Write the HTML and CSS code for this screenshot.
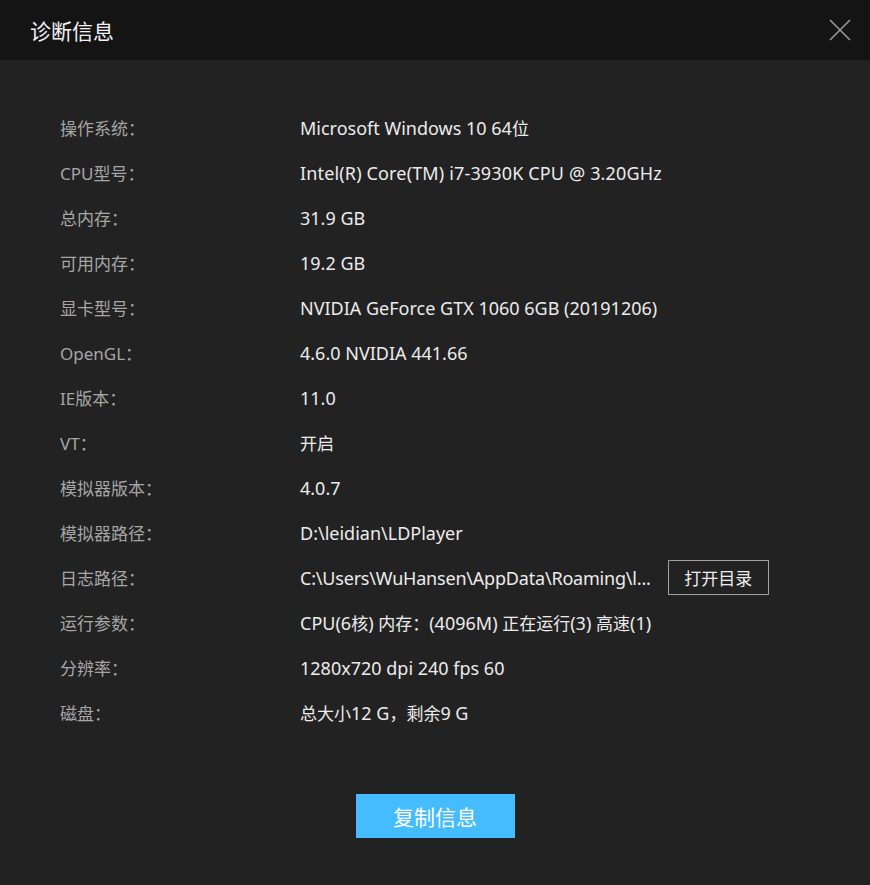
FILE: index.html
```html
<!DOCTYPE html>
<html lang="zh">
<head>
<meta charset="utf-8">
<link rel="stylesheet" href="styles.css">
</head>
<body>
<div class="dialog">
  <div class="header">
    <div class="title">诊断信息</div>
    <svg class="close" width="24" height="24" viewBox="0 0 24 24"><path d="M2 2 L22 22 M22 2 L2 22" stroke="#9a9a9a" stroke-width="1.6" fill="none"/></svg>
  </div>
  <div class="body">
    <div class="row"><div class="label">操作系统：</div><div class="value">Microsoft Windows 10 64<span class="cjk">位</span></div></div>
    <div class="row"><div class="label">CPU型号：</div><div class="value wide">Intel(R) Core(TM) i7-3930K CPU @ 3.20GHz</div></div>
    <div class="row"><div class="label">总内存：</div><div class="value">31.9 GB</div></div>
    <div class="row"><div class="label">可用内存：</div><div class="value">19.2 GB</div></div>
    <div class="row"><div class="label">显卡型号：</div><div class="value">NVIDIA GeForce GTX 1060 6GB (20191206)</div></div>
    <div class="row"><div class="label">OpenGL：</div><div class="value">4.6.0 NVIDIA 441.66</div></div>
    <div class="row"><div class="label">IE版本：</div><div class="value">11.0</div></div>
    <div class="row"><div class="label">VT：</div><div class="value"><span class="cjk">开启</span></div></div>
    <div class="row"><div class="label">模拟器版本：</div><div class="value">4.0.7</div></div>
    <div class="row"><div class="label">模拟器路径：</div><div class="value">D:\leidian\LDPlayer</div></div>
    <div class="row"><div class="label">日志路径：</div><div class="value path"><span class="path-text">C:\Users\WuHansen\AppData\Roaming\l...</span><button class="open-btn">打开目录</button></div></div>
    <div class="row"><div class="label">运行参数：</div><div class="value">CPU(6<span class="cjk">核</span>) <span class="cjk">内存：</span>(4096M) <span class="cjk">正在运行</span>(3) <span class="cjk">高速</span>(1)</div></div>
    <div class="row"><div class="label">分辨率：</div><div class="value">1280x720 dpi 240 fps 60</div></div>
    <div class="row"><div class="label">磁盘：</div><div class="value"><span class="cjk">总大小</span>12 G<span class="cjk">，剩余</span>9 G</div></div>
    <div class="actions"><button class="copy-btn">复制信息</button></div>
  </div>
</div>
</body>
</html>
```

FILE: styles.css
```css
html, body {
  margin: 0;
  padding: 0;
  background: #222222;
}
body {
  font-family: "Noto Sans", "Noto Sans CJK SC", sans-serif;
  width: 870px;
  height: 885px;
  overflow: hidden;
}
.dialog {
  width: 870px;
  height: 885px;
  background: #222222;
}
.header {
  height: 60px;
  background: #141414;
  display: flex;
  align-items: center;
  justify-content: space-between;
  padding: 0 18px 0 30px;
}
.title {
  color: #f2f2f2;
  font-size: 21px;
  font-family: "Noto Sans CJK SC", sans-serif;
}
.close {
  display: block;
}
.body {
  padding: 45px 0 0 60px;
}
.row {
  display: flex;
  align-items: center;
  height: 45px;
  font-size: 17px;
}
.label {
  width: 240px;
  color: #a6a6a6;
}
.value {
  color: #ececec;
  font-size: 18px;
}
.value.wide {
  letter-spacing: 0.15px;
}
.cjk {
  font-size: 17px;
}
.path {
  display: flex;
  align-items: center;
}
.path-text {
  letter-spacing: -0.2px;
}
.open-btn {
  margin-left: 17px;
  width: 101px;
  height: 35px;
  background: transparent;
  border: 1px solid #a0a0a0;
  color: #ececec;
  font-family: "Noto Sans CJK SC", sans-serif;
  font-size: 17px;
  padding: 0;
}
.actions {
  display: flex;
  justify-content: center;
  margin-top: 59px;
  padding-right: 60px;
}
.copy-btn {
  width: 159px;
  height: 44px;
  background: #45bcfd;
  border: none;
  color: #ffffff;
  font-family: "Noto Sans CJK SC", sans-serif;
  font-size: 21px;
  padding: 0;
}
```
